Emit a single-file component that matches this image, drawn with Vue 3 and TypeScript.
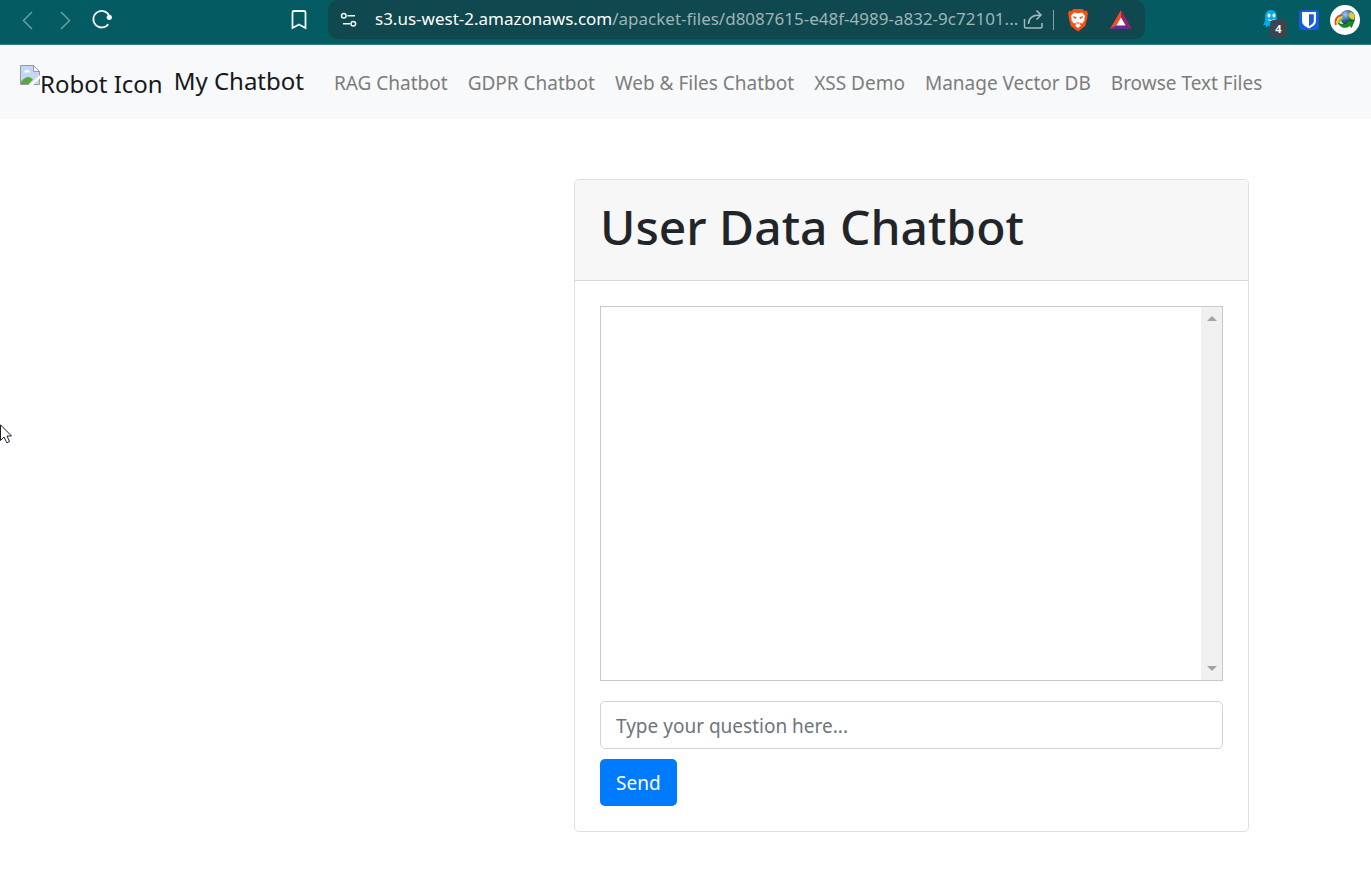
<script setup lang="ts">
import { ref } from 'vue'

interface NavLink {
  label: string
  href: string
}

const links: NavLink[] = [
  { label: 'RAG Chatbot', href: '#rag' },
  { label: 'GDPR Chatbot', href: '#gdpr' },
  { label: 'Web & Files Chatbot', href: '#web-files' },
  { label: 'XSS Demo', href: '#xss' },
  { label: 'Manage Vector DB', href: '#vector-db' },
  { label: 'Browse Text Files', href: '#text-files' },
]

const question = ref<string>('')
const messages = ref<string[]>([])

function send(): void {
  const text = question.value.trim()
  if (!text) return
  messages.value.push(text)
  question.value = ''
}
</script>

<template>
  <div class="window">
    <header class="toolbar">
      <div class="history">
        <button class="tool dim" type="button" aria-label="Back">
          <svg width="20" height="22" viewBox="0 0 20 22"><path d="M14 3 5.500 11.500 14 20" /></svg>
        </button>
        <button class="tool dim" type="button" aria-label="Forward">
          <svg width="20" height="22" viewBox="0 0 20 22"><path d="M6 3l8.500 8.500L6 20" /></svg>
        </button>
        <button class="tool" type="button" aria-label="Reload">
          <svg width="22" height="22" viewBox="0 0 22 22">
            <path class="thick" d="M16.300 15.200A8.300 8.300 0 1 1 16.900 6.100" />
            <circle class="solid" cx="17.300" cy="8.300" r="2.600" />
          </svg>
        </button>
      </div>
      <button class="tool bookmark" type="button" aria-label="Bookmark">
        <svg width="20" height="22" viewBox="0 0 20 22">
          <path class="thick" d="M5 2h10a1.500 1.500 0 0 1 1.500 1.500V19L10 15.500 3.500 19V3.500A1.500 1.500 0 0 1 5 2z" />
        </svg>
      </button>
      <div class="address">
        <button class="tool" type="button" aria-label="Site settings">
          <svg width="18" height="18" viewBox="0 0 18 18">
            <g class="medium">
              <circle cx="3.800" cy="4.700" r="2.300" /><path d="M7.500 4.700H15M3 12.800h7" />
              <circle cx="13.300" cy="12.800" r="2.300" />
            </g>
          </svg>
        </button>
        <span class="url"><span class="host">s3.us-west-2.amazonaws.com</span>/apacket-files/d8087615-e48f-4989-a832-9c72101...</span>
        <button class="tool share" type="button" aria-label="Share">
          <svg width="22" height="22" viewBox="0 0 22 22">
            <path d="M2.500 10v7.500q0 1.500 1.500 1.500h14.500q1.500 0 1.500-1.500V14M6.500 15C6.500 9 10 6 18.500 6M14.500 1.500 19 6l-4.500 4.500" />
          </svg>
        </button>
        <span class="divider"></span>
        <button class="tool brave" type="button" aria-label="Brave Shields">
          <svg width="22" height="24" viewBox="0 0 22 24">
            <path fill="#ff4f13" stroke="none" d="M6.500 1h9l2 2 2.300-.2L21 6l-.8 2 .3 1-2.300 9-7.200 5.500L3.800 18 1.500 9l.3-1L1 6l1.200-3.200 2.300.2z" />
            <path fill="#fff" stroke="none" d="M7 4.500 11 5.200 15 4.500 18.200 8l-1 3 .5 1-2.500 3.500-1.700-.5-1 1 1.500 1.500L11 20l-3-2.500L9.500 16l-1-1-1.700.5L4.300 12l.5-1-1-3z" />
            <path fill="#ff4f13" stroke="none" d="m6 8.300 3.500.7-.5 2-2.500-1.200zm10 0-3.500.7.5 2 2.500-1.200zM9.500 14l1.500.8 1.500-.8v1L11 16l-1.500-1z" />
          </svg>
        </button>
        <button class="tool" type="button" aria-label="Brave Rewards">
          <svg width="24" height="22" viewBox="0 0 24 22">
            <path fill="#ff4724" stroke="none" d="M12 1v8L7.500 16.500 1 20z" />
            <path fill="#9e1f63" stroke="none" d="M12 1l11 19-6.500-3.500L12 9z" />
            <path fill="#662d91" stroke="none" d="M1 20l6.500-3.500h9L23 20z" />
            <path fill="#fff" stroke="none" d="M12 8.500 16.700 16.500H7.300z" />
          </svg>
        </button>
      </div>
      <div class="extensions">
        <button class="tool ghost" type="button" aria-label="Ghostery">
          <svg width="18" height="22" viewBox="0 0 18 22">
            <path fill="#00aef0" stroke="none" d="M9 1C5 1 3 4 3.200 8L3 12 1 16.500l2.500-.7L4 18.500l2.500-2 2.500 2 2-2.500 4 1.500-.4-10C14.500 4 13 1 9 1z" />
            <ellipse cx="7" cy="6.500" rx="1.500" ry="2" fill="#fff" stroke="none" />
            <ellipse cx="12" cy="6.500" rx="1.500" ry="2" fill="#fff" stroke="none" />
            <path d="M6 10.500q3.500 2.500 6.500 0" />
          </svg>
          <span class="badge">4</span>
        </button>
        <button class="tool" type="button" aria-label="Bitwarden">
          <svg width="20" height="20" viewBox="0 0 20 20">
            <rect width="20" height="20" rx="3" fill="#175ddc" stroke="none" />
            <path fill="#fff" stroke="none" d="M3 2h14v9c0 3.500-3.500 5.800-7 7.500-3.500-1.700-7-4-7-7.500z" />
            <path fill="#175ddc" stroke="none" d="M10 4.200h4.800V11c0 2-2 3.700-4.800 5.200z" />
          </svg>
        </button>
        <button class="tool" type="button" aria-label="Download manager">
          <svg width="30" height="30" viewBox="0 0 30 30">
            <defs>
              <radialGradient id="globe" cx=".35" cy=".3" r=".75">
                <stop offset="0" stop-color="#a9c8ef" />
                <stop offset=".5" stop-color="#3a68ab" />
                <stop offset="1" stop-color="#102a55" />
              </radialGradient>
            </defs>
            <circle cx="15" cy="15" r="15" fill="#fff" stroke="none" />
            <circle cx="17.500" cy="12.500" r="7.500" fill="url(#globe)" stroke="none" />
            <path fill="#d8cf2e" stroke="none" d="M20 7q4 .5 4.800 4.500L24 15l-3-1-2.500-3z" />
            <path stroke="#dd4a2a" stroke-width="2" d="M6 20C4.500 14.500 7 11 12 10" />
            <path stroke="#f5d52e" stroke-width="2" d="M7.500 19.500c-1-4 1-7 5-7.500" />
            <path stroke="#62c74b" stroke-width="2" d="M9.200 19c-.5-3 1-4.800 4-5.200" />
            <path fill="#178b20" stroke="#064d12" stroke-width=".6" d="M8.500 18.500c3 1.200 5.800 1 8.500-.7l-1-1.800 8.500-.8-3 7.300-1.500-2C16.500 23.500 11 23 8.500 18.500z" />
          </svg>
        </button>
      </div>
    </header>

    <nav class="navbar">
      <a class="brand" href="#home">
        <span class="missing" role="img" aria-label="Robot Icon">
          <svg width="20" height="20" viewBox="0 0 20 20">
            <path fill="#c5d7f7" stroke="#999" d="M.5.500h13l6 6v13H.5z" />
            <path fill="#fff" stroke="#999" d="M13.500.500v6h6z" />
            <path fill="#fff" stroke="none" d="M4 7.500q0-2 2-2 1-2 2.500 0Q10 6 10 7.500z" />
            <path fill="#55aa3c" stroke="none" d="M1 19v-2.500q7-8 12-2L8.500 19z" />
            <path fill="#f8f9fa" stroke="none" d="M20 10v3.500L13 20H8.500z" />
          </svg>
          <span class="alt">Robot Icon</span>
        </span>
        <span>My Chatbot</span>
      </a>
      <ul class="links">
        <li v-for="link in links" :key="link.href"><a :href="link.href">{{ link.label }}</a></li>
      </ul>
    </nav>

    <main class="content">
      <section class="card">
        <div class="card-header"><h1>User Data Chatbot</h1></div>
        <div class="card-body">
          <div class="chat">
            <div class="log" aria-live="polite">
              <p v-for="(message, index) in messages" :key="index">{{ message }}</p>
            </div>
            <div class="track" aria-hidden="true">
              <svg width="10" height="5" viewBox="0 0 10 5"><path fill="#a3a3a3" stroke="none" d="M0 5 5 0l5 5z" /></svg>
              <svg width="10" height="5" viewBox="0 0 10 5"><path fill="#a3a3a3" stroke="none" d="M0 0l5 5 5-5z" /></svg>
            </div>
          </div>
          <form @submit.prevent="send">
            <input v-model="question" type="text" aria-label="Question" placeholder="Type your question here..." />
            <button class="send" type="submit">Send</button>
          </form>
        </div>
      </section>
    </main>

    <svg class="pointer" width="13" height="20" viewBox="0 0 13 20" aria-hidden="true">
      <path fill="#fff" stroke="#1c1c2b" d="M.5.800v15.700l3.500-3.500 2.800 5.800 2.700-1.300L7 12h4.500z" />
    </svg>
  </div>
</template>

<style>
body {
  margin: 0;
  background: #fff;
}
</style>

<style scoped>
.window {
  position: relative;
  font-family: "Noto Sans", "Open Sans", sans-serif;
  font-size: 19px;
  line-height: 30px;
  color: #212529;
}

svg {
  display: block;
  flex: none;
  fill: none;
  stroke: currentColor;
}

.toolbar {
  display: flex;
  align-items: flex-start;
  height: 45px;
  background: #045b61;
  border-bottom: 1px solid #3b8085;
  box-sizing: border-box;
}

.tool {
  display: flex;
  flex: none;
  align-items: center;
  justify-content: center;
  height: 39px;
  padding: 0;
  border: 0;
  background: none;
  color: #f2f7f7;
}

.dim {
  color: #6c9da1;
}

.dim path {
  stroke-width: 1.500;
}

.thick {
  stroke-width: 1.800;
}

.medium {
  stroke-width: 1.500;
}

.solid {
  fill: currentColor;
  stroke: none;
}

.history {
  display: flex;
  gap: 17px;
  padding-left: 18px;
}

.bookmark {
  margin-left: auto;
  margin-right: 19px;
}

.address {
  display: flex;
  align-items: center;
  flex: 0 0 817px;
  box-sizing: border-box;
  height: 39px;
  padding: 0 12px;
  border-radius: 10px;
  background: #0f484e;
}

.url {
  flex: 1;
  min-width: 0;
  margin-left: 17px;
  overflow: hidden;
  white-space: nowrap;
  font-size: 17px;
  line-height: 28px;
  padding-bottom: 2px;
  color: #9fb5b7;
}

.host {
  color: #fff;
}

.share {
  color: #a5babc;
}

.share path {
  stroke-width: 1.500;
}

.divider {
  width: 1px;
  height: 20px;
  margin: 0 13px 0 9px;
  background: #87a3a6;
}

.brave {
  margin-right: 20px;
}

.extensions {
  display: flex;
  flex: 0 0 226px;
  box-sizing: border-box;
  justify-content: flex-end;
  gap: 11px;
  padding-right: 11px;
}

.ghost {
  position: relative;
  margin-right: 8px;
}

.badge {
  position: absolute;
  left: 8px;
  top: 20px;
  width: 17px;
  height: 17px;
  border-radius: 4px;
  background: #3e444b;
  font: bold 11px/17px "Noto Sans", sans-serif;
  text-align: center;
}

.navbar {
  display: flex;
  align-items: center;
  min-height: 74px;
  box-sizing: border-box;
  padding: 2px 20px 0;
  background: #f8f9fa;
}

.brand {
  display: flex;
  gap: 11px;
  margin-right: 30px;
  padding-bottom: 2px;
  font-size: 24px;
  line-height: 38px;
  white-space: nowrap;
  color: #16181b;
  text-decoration: none;
}

.missing {
  display: flex;
  padding-top: 3px;
}

.links {
  display: flex;
  gap: 20px;
  margin: 0;
  padding: 0;
  list-style: none;
}

.links a {
  color: #7c7d7d;
  text-decoration: none;
  white-space: nowrap;
}

.content {
  display: flex;
  justify-content: flex-end;
  padding: 60px 122px 41px 20px;
}

.card {
  flex: 0 1 675px;
  box-sizing: border-box;
  border: 1px solid #dfdfdf;
  border-radius: 5px;
  background: #fff;
}

.card-header {
  padding: 17px 25px 23px;
  border-bottom: 1px solid #d8d8d8;
  border-radius: 4px 4px 0 0;
  background: #f7f7f7;
}

h1 {
  margin: 0;
  font-size: 48px;
  font-weight: 500;
  line-height: 60px;
}

.card-body {
  padding: 25px;
}

.chat {
  display: flex;
  box-sizing: border-box;
  height: 375px;
  margin-bottom: 20px;
  border: 1px solid #c9c9c9;
}

.log {
  flex: 1;
  min-width: 0;
  overflow: auto;
}

.log p {
  margin: 0;
  padding: 10px;
}

.track {
  display: flex;
  flex-direction: column;
  align-items: center;
  justify-content: space-between;
  width: 21px;
  box-sizing: border-box;
  padding: 9px 0;
  background: #f0f0f0;
}

form {
  display: flex;
  flex-direction: column;
  align-items: flex-start;
  gap: 10px;
}

input {
  width: 100%;
  height: 48px;
  box-sizing: border-box;
  padding: 2px 15px 0;
  border: 1px solid #ced4da;
  border-radius: 5px;
  font: inherit;
  color: #495057;
}

input::placeholder {
  color: #6c757d;
  opacity: 1;
}

.send {
  height: 47px;
  padding: 0 16px;
  border: 0;
  border-radius: 5px;
  background: #007bff;
  font: inherit;
  color: #fff;
}

.pointer {
  position: absolute;
  left: 0;
  top: 424px;
}
</style>
